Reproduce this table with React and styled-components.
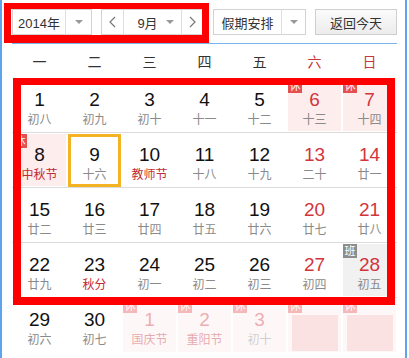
import styled, { createGlobalStyle } from 'styled-components';

const GlobalStyle = createGlobalStyle`
  html, body { margin: 0; padding: 0; background: #fff; }
  body {
    font-family: "Liberation Sans", Arial, "Noto Sans CJK SC", sans-serif;
    color: #000;
  }
`;

const WEEK = ['一', '二', '三', '四', '五', '六', '日'];

// t: h = 休 (holiday), w = 班 (work day)
const DAYS = [
  { d: 1, l: '初八' }, { d: 2, l: '初九' }, { d: 3, l: '初十' }, { d: 4, l: '十一' },
  { d: 5, l: '十二' }, { d: 6, l: '十三', t: 'h' }, { d: 7, l: '十四', t: 'h' },
  { d: 8, l: '中秋节', f: true, t: 'h' }, { d: 9, l: '十六', today: true }, { d: 10, l: '教师节', f: true },
  { d: 11, l: '十八' }, { d: 12, l: '十九' }, { d: 13, l: '二十' }, { d: 14, l: '廿一' },
  { d: 15, l: '廿二' }, { d: 16, l: '廿三' }, { d: 17, l: '廿四' }, { d: 18, l: '廿五' },
  { d: 19, l: '廿六' }, { d: 20, l: '廿七' }, { d: 21, l: '廿八' },
  { d: 22, l: '廿九' }, { d: 23, l: '秋分', f: true }, { d: 24, l: '初一' }, { d: 25, l: '初二' },
  { d: 26, l: '初三' }, { d: 27, l: '初四' }, { d: 28, l: '初五', t: 'w' },
  { d: 29, l: '初六' }, { d: 30, l: '初七' },
  { d: 1, l: '国庆节', t: 'h', other: true }, { d: 2, l: '重阳节', t: 'h', other: true },
  { d: 3, l: '初十', t: 'h', other: true }, { d: 4, l: '', t: 'h', other: true, ghost: true },
  { d: 5, l: '', t: 'h', other: true, ghost: true },
];

function Chevron({ dir }) {
  return (
    <svg width="7" height="12" viewBox="0 0 7 12">
      <polyline
        points={dir === 'left' ? '6,1 1,6 6,11' : '1,1 6,6 1,11'}
        fill="none"
        stroke="#777"
        strokeWidth="1.2"
      />
    </svg>
  );
}

export default function App() {
  return (
    <>
      <GlobalStyle />
      <Widget>
        <Header>
          <Select $w={80}>
            <SelectLabel>2014年</SelectLabel>
            <ArrowBox $w={25}><Caret /></ArrowBox>
          </Select>
          <MonthGroup>
            <NavBtn><Chevron dir="left" /></NavBtn>
            <MonthSelect>
              <MonthText>9月</MonthText>
              <Caret />
            </MonthSelect>
            <NavBtn $last><Chevron dir="right" /></NavBtn>
          </MonthGroup>
          <Select $w={93}>
            <SelectLabel>假期安排</SelectLabel>
            <ArrowBox $w={23}><Caret /></ArrowBox>
          </Select>
          <TodayBtn>返回今天</TodayBtn>
        </Header>

        <WeekRow>
          {WEEK.map((w, i) => (
            <WeekDay key={w} $weekend={i >= 5}>{w}</WeekDay>
          ))}
        </WeekRow>

        <Grid>
          {DAYS.map((day, i) => {
            const col = i % 7;
            const weekend = col >= 5;
            const bg = day.t === 'h' ? '#fdeded' : day.t === 'w' ? '#f1f1f1' : '#fff';
            return (
              <Cell key={i} $bg={bg} $other={day.other} $last={i >= 28}>
                {day.t && <Tag $work={day.t === 'w'}>{day.t === 'w' ? '班' : '休'}</Tag>}
                {day.today && <TodayRing />}
                {day.ghost ? (
                  <Ghost />
                ) : (
                  <>
                    <Num $red={weekend || (day.other && day.t === 'h')}>{day.d}</Num>
                    <Lunar $fest={day.f || (day.other && day.d <= 2)}>{day.l}</Lunar>
                  </>
                )}
              </Cell>
            );
          })}
        </Grid>

        <Mark $top={3} $left={4} $w={205} $h={40} $bw="6px 7px 8px 7px" />
        <Mark $top={78} $left={13} $w={382} $h={227} $bw="7px 8px 8px 8px" />
      </Widget>
    </>
  );
}

const Widget = styled.div`
  position: relative;
  box-sizing: border-box;
  width: 407px;
  height: 358px;
  overflow: hidden;
  padding: 0 8px 0 10px;
  border-left: 2px solid #5ea4ec;
  border-right: 2px solid #5ea4ec;
  background: #fff;
`;

const Header = styled.div`
  display: flex;
  gap: 9px;
  padding: 9px 0 8px;
  border-bottom: 1px solid #79b4ec;
`;

const Select = styled.div`
  box-sizing: border-box;
  display: flex;
  width: ${(p) => p.$w}px;
  height: 26px;
  border: 1px solid #d3d3d3;
  background: #fff;
  font-size: 13px;
  color: #333;
`;

const SelectLabel = styled.div`
  flex: 1;
  display: flex;
  align-items: center;
  justify-content: center;
  white-space: nowrap;
`;

const ArrowBox = styled.div`
  width: ${(p) => p.$w}px;
  display: flex;
  align-items: center;
  justify-content: center;
  border-left: 1px solid #dedede;
`;

const Caret = styled.i`
  display: block;
  flex: none;
  width: 0;
  height: 0;
  border-left: 4px solid transparent;
  border-right: 4px solid transparent;
  border-top: 4px solid #999;
`;

const MonthGroup = styled.div`
  box-sizing: border-box;
  display: flex;
  width: 103px;
  height: 26px;
  border: 1px solid #d3d3d3;
  background: #fff;
  font-size: 13px;
  color: #333;
`;

const NavBtn = styled.div`
  width: 21px;
  display: flex;
  align-items: center;
  justify-content: center;
  border-right: ${(p) => (p.$last ? 'none' : '1px solid #dedede')};
  border-left: ${(p) => (p.$last ? '1px solid #dedede' : 'none')};
`;

const MonthSelect = styled.div`
  flex: 1;
  display: flex;
  align-items: center;
  padding: 0 7px 0 11px;
`;

const MonthText = styled.span`
  flex: 1;
  text-align: center;
  white-space: nowrap;
  padding-right: 6px;
`;

const TodayBtn = styled.div`
  box-sizing: border-box;
  width: 82px;
  height: 26px;
  display: flex;
  align-items: center;
  justify-content: center;
  border: 1px solid #cfcfcf;
  background: linear-gradient(#fbfbfb, #ececec);
  font-size: 13px;
  color: #333;
`;

const WeekRow = styled.div`
  display: grid;
  grid-template-columns: repeat(7, 55px);
  height: 34px;
  align-items: center;
`;

const WeekDay = styled.div`
  text-align: center;
  font-size: 14px;
  color: ${(p) => (p.$weekend ? '#c9353c' : '#333')};
`;

const Grid = styled.div`
  display: grid;
  grid-template-columns: repeat(7, 55px);
  grid-auto-rows: 55px;
`;

const Cell = styled.div`
  position: relative;
  box-sizing: border-box;
  display: flex;
  flex-direction: column;
  align-items: center;
  padding-top: 11px;
  background: ${(p) => p.$bg};
  box-shadow: inset 0 0 0 1px #fff;
  border-bottom: ${(p) => (p.$last ? 'none' : '1px solid #dcdcdc')};
  opacity: ${(p) => (p.$other ? 0.4 : 1)};
`;

const Num = styled.div`
  font-size: 19px;
  line-height: 22px;
  color: ${(p) => (p.$red ? '#d2353c' : '#111')};
`;

const Lunar = styled.div`
  margin-top: 1px;
  font-size: 12px;
  line-height: 16px;
  color: ${(p) => (p.$fest ? '#c32b33' : '#8a8a8a')};
`;

const Tag = styled.div`
  position: absolute;
  top: 1px;
  left: 1px;
  width: 14px;
  height: 14px;
  font-size: 11px;
  line-height: 14px;
  text-align: center;
  color: #fff;
  background: ${(p) => (p.$work ? '#8c8c8c' : '#e45050')};
`;

const TodayRing = styled.div`
  position: absolute;
  inset: 1px 1px 0 1px;
  border: 3px solid #f4b323;
`;

const Ghost = styled.div`
  width: 46px;
  height: 36px;
  margin-top: 6px;
  background: #f7b8b8;
`;

const Mark = styled.div`
  position: absolute;
  box-sizing: border-box;
  top: ${(p) => p.$top}px;
  left: ${(p) => p.$left - 2}px;
  width: ${(p) => p.$w}px;
  height: ${(p) => p.$h}px;
  border-style: solid;
  border-color: #ff0000;
  border-width: ${(p) => p.$bw};
  pointer-events: none;
`;
